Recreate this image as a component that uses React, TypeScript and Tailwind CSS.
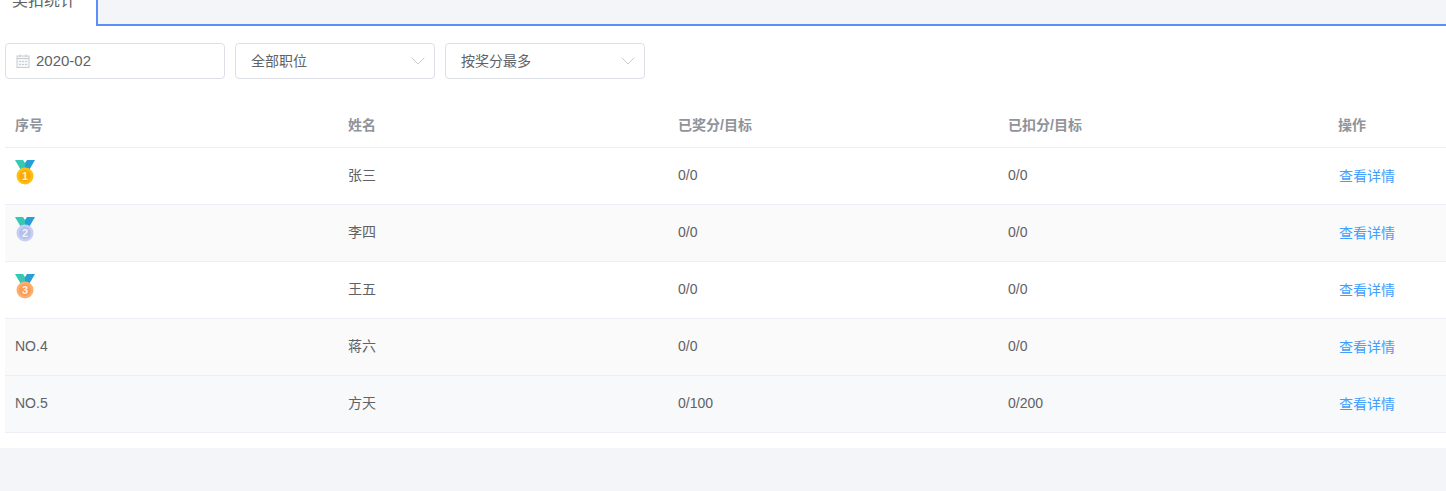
import { ChevronDown } from 'lucide-react';

function Medal({ n, color, ring, numColor }: { n: number; color: string; ring: string; numColor: string }) {
    return (
        <svg width="20" height="25" viewBox="0 0 20 25" className="block">
            <path d="M0 0H8L10 3V12H7Z" fill="#35c9b4" />
            <path d="M20 0H12L10 3V12H13Z" fill="#279fd6" />
            <circle cx="10" cy="16" r="8.5" fill={color} />
            <circle cx="10" cy="16" r="6" fill={ring} />
            <text x="10" y="20" textAnchor="middle" fontSize="11" fontWeight="700" fill={numColor} fontFamily="Liberation Sans, sans-serif">{n}</text>
        </svg>
    );
}

function CalendarIcon() {
    return (
        <svg width="14" height="14" viewBox="0 0 14 14" className="block" fill="none" stroke="#c8ccd3">
            <rect x="1" y="2" width="12" height="11.5" fill="#f5f6f8" />
            <path d="M4 0.5V3M10 0.5V3" />
            <path d="M1 4.5H13" />
            <path d="M3 7.5H11M3 10.5H11" strokeDasharray="2 1" />
        </svg>
    );
}

const rows = [
    { rank: 1, name: '张三', award: '0/0', deduct: '0/0' },
    { rank: 2, name: '李四', award: '0/0', deduct: '0/0' },
    { rank: 3, name: '王五', award: '0/0', deduct: '0/0' },
    { rank: 4, name: '蒋六', award: '0/0', deduct: '0/0' },
    { rank: 5, name: '方天', award: '0/100', deduct: '0/200' },
];

const medals = [
    { color: '#fdc00f', ring: '#fba90a', numColor: '#fff3c4' },
    { color: '#c5cdf2', ring: '#b6bfea', numColor: '#eef0fb' },
    { color: '#fcae6e', ring: '#fa9d55', numColor: '#fff0e0' },
];

export default function App() {
    return (
        <div className="h-[491px] w-[1446px] overflow-hidden bg-[#f4f5f9] font-['Liberation_Sans','Noto_Sans_CJK_SC',sans-serif] text-[14px] text-[#606266]">
            <div className="h-[448px] bg-white">
                {/* Tab bar, scrolled so the label is cut at the top */}
                <div className="flex h-[26px]">
                    <div className="h-[26px] w-[96px] overflow-hidden pl-[12px]">
                        <div className="mt-[-9px] text-[16px] leading-[20px]">奖扣统计</div>
                    </div>
                    <div className="flex-1 border-b-2 border-l-2 border-[#5b8ff9] bg-[#f4f5f9]"></div>
                </div>

                {/* Filters */}
                <div className="mt-[17px] flex gap-[10px] pl-[5px]">
                    <div className="flex h-[36px] w-[220px] items-center rounded-[4px] border border-[#dcdfe6] pl-[10px]">
                        <CalendarIcon />
                        <span className="ml-[6px] text-[15px]">2020-02</span>
                    </div>
                    <div className="flex h-[36px] w-[200px] items-center justify-between rounded-[4px] border border-[#dcdfe6] pl-[15px] pr-[4px]">
                        <span>全部职位</span>
                        <ChevronDown size={24} strokeWidth={0.9} className="text-[#c0c4cc]" />
                    </div>
                    <div className="flex h-[36px] w-[200px] items-center justify-between rounded-[4px] border border-[#dcdfe6] pl-[15px] pr-[4px]">
                        <span>按奖分最多</span>
                        <ChevronDown size={24} strokeWidth={0.9} className="text-[#c0c4cc]" />
                    </div>
                </div>

                {/* Table */}
                <div className="ml-[5px] mt-[24px]">
                    <div className="grid h-[45px] grid-cols-[333px_330px_330px_330px_118px] items-center border-b border-[#ebeef5] text-[14px] font-bold text-[#909399]">
                        <div className="pl-[10px]">序号</div>
                        <div className="pl-[10px]">姓名</div>
                        <div className="pl-[10px]">已奖分/目标</div>
                        <div className="pl-[10px]">已扣分/目标</div>
                        <div className="pl-[10px]">操作</div>
                    </div>
                    {rows.map((r, i) => (
                        <div key={r.rank} className={`grid h-[57px] grid-cols-[333px_330px_330px_330px_118px] items-center border-b border-[#ebeef5] pb-[2px] ${i === 4 ? 'bg-[#f8f9fb]' : i % 2 === 1 ? 'bg-[#fafafa]' : ''}`}>
                            <div className="pl-[10px]">
                                {i < 3 ? (
                                    <div className="mt-[-6px]"><Medal n={r.rank} color={medals[i].color} ring={medals[i].ring} numColor={medals[i].numColor} /></div>
                                ) : (
                                    <span>NO.{r.rank}</span>
                                )}
                            </div>
                            <div className="pl-[10px]">{r.name}</div>
                            <div className="pl-[10px]">{r.award}</div>
                            <div className="pl-[10px]">{r.deduct}</div>
                            <div className="pl-[11px] pt-[2px] text-[14px] text-[#409eff]">查看详情</div>
                        </div>
                    ))}
                </div>
            </div>
        </div>
    );
}
